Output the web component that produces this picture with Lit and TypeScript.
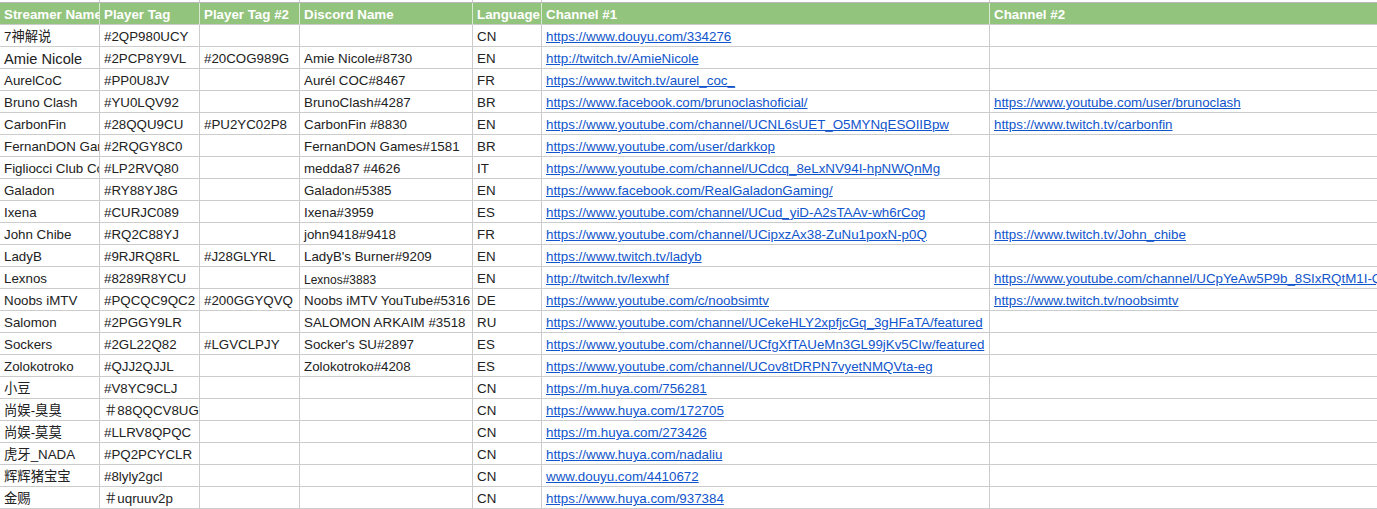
import { LitElement, html, css } from "lit";
import { customElement } from "lit/decorators.js";

type Row = { c: string[]; big?: boolean; smallDiscord?: boolean };
const rows: Row[] = [
  { c: ["7神解说", "#2QP980UCY", "", "", "CN", "https://www.douyu.com/334276", ""] },
  { c: ["Amie Nicole", "#2PCP8Y9VL", "#20COG989G", "Amie Nicole#8730", "EN", "http://twitch.tv/AmieNicole", ""], big: true },
  { c: ["AurelCoC", "#PP0U8JV", "", "Aurél COC#8467", "FR", "https://www.twitch.tv/aurel_coc_", ""] },
  { c: ["Bruno Clash", "#YU0LQV92", "", "BrunoClash#4287", "BR", "https://www.facebook.com/brunoclashoficial/", "https://www.youtube.com/user/brunoclash"] },
  { c: ["CarbonFin", "#28QQU9CU", "#PU2YC02P8", "CarbonFin #8830", "EN", "https://www.youtube.com/channel/UCNL6sUET_O5MYNqESOIIBpw", "https://www.twitch.tv/carbonfin"] },
  { c: ["FernanDON Games", "#2RQGY8C0", "", "FernanDON Games#1581", "BR", "https://www.youtube.com/user/darkkop", ""] },
  { c: ["Figliocci Club Coc", "#LP2RVQ80", "", "medda87 #4626", "IT", "https://www.youtube.com/channel/UCdcq_8eLxNV94I-hpNWQnMg", ""] },
  { c: ["Galadon", "#RY88YJ8G", "", "Galadon#5385", "EN", "https://www.facebook.com/RealGaladonGaming/", ""] },
  { c: ["Ixena", "#CURJC089", "", "Ixena#3959", "ES", "https://www.youtube.com/channel/UCud_yiD-A2sTAAv-wh6rCog", ""] },
  { c: ["John Chibe", "#RQ2C88YJ", "", "john9418#9418", "FR", "https://www.youtube.com/channel/UCipxzAx38-ZuNu1poxN-p0Q", "https://www.twitch.tv/John_chibe"] },
  { c: ["LadyB", "#9RJRQ8RL", "#J28GLYRL", "LadyB's Burner#9209", "EN", "https://www.twitch.tv/ladyb", ""] },
  { c: ["Lexnos", "#8289R8YCU", "", "Lexnos#3883", "EN", "http://twitch.tv/lexwhf", "https://www.youtube.com/channel/UCpYeAw5P9b_8SIxRQtM1I-Q"], smallDiscord: true },
  { c: ["Noobs iMTV", "#PQCQC9QC2", "#200GGYQVQ", "Noobs iMTV YouTube#5316", "DE", "https://www.youtube.com/c/noobsimtv", "https://www.twitch.tv/noobsimtv"] },
  { c: ["Salomon", "#2PGGY9LR", "", "SALOMON ARKAIM #3518", "RU", "https://www.youtube.com/channel/UCekeHLY2xpfjcGq_3gHFaTA/featured", ""] },
  { c: ["Sockers", "#2GL22Q82", "#LGVCLPJY", "Socker's SU#2897", "ES", "https://www.youtube.com/channel/UCfgXfTAUeMn3GL99jKv5CIw/featured", ""] },
  { c: ["Zolokotroko", "#QJJ2QJJL", "", "Zolokotroko#4208", "ES", "https://www.youtube.com/channel/UCov8tDRPN7vyetNMQVta-eg", ""] },
  { c: ["小豆", "#V8YC9CLJ", "", "", "CN", "https://m.huya.com/756281", ""] },
  { c: ["尚娱-臭臭", "＃88QQCV8UG", "", "", "CN", "https://www.huya.com/172705", ""] },
  { c: ["尚娱-莫莫", "#LLRV8QPQC", "", "", "CN", "https://m.huya.com/273426", ""] },
  { c: ["虎牙_NADA", "#PQ2PCYCLR", "", "", "CN", "https://www.huya.com/nadaliu", ""] },
  { c: ["辉辉猪宝宝", "#8lyly2gcl", "", "", "CN", "www.douyu.com/4410672", ""] },
  { c: ["金赐", "＃uqruuv2p", "", "", "CN", "https://www.huya.com/937384", ""] },
];
const heads = ["Streamer Name", "Player Tag", "Player Tag #2", "Discord Name", "Language", "Channel #1", "Channel #2"];

@customElement("app-root")
export class AppRoot extends LitElement {
  static styles = css`
    :host { display: block; width: 1377px; height: 509px; overflow: hidden; background: #fff;
      font-family: "Liberation Sans", Arial, "Noto Sans CJK SC", sans-serif; font-size: 13.333px; color: #222; }
    .row { display: grid; grid-template-columns: 100px 100px 100px 173px 69px 448px 400px; height: 22px; box-sizing: border-box; width: 1390px; }
    .stub { height: 3px; border-bottom: 1px solid #b7b7b7; }
    .stub .cell { border-bottom: 0; height: 2px; }
    .cell { box-sizing: border-box; border-right: 1px solid #ccc; border-bottom: 1px solid #ccc; padding: 2px 3px 0 4px;
      white-space: nowrap; overflow: hidden; line-height: 20px; height: 22px; }
    .head .cell { background: #93c47d; color: #fff; font-weight: 700; border-right-color: #d9ead3; }
    .big { font-size: 14.667px; }
    .small { font-size: 12px; padding-top: 3px; }
    a { color: #1155cc; text-decoration: underline; }
  `;
  render() {
    return html`
      <div class="row stub">${heads.map(() => html`<div class="cell"></div>`)}</div>
      <div class="row head">${heads.map((h) => html`<div class="cell">${h}</div>`)}</div>
      ${rows.map((r) => html`<div class="row">
        ${r.c.map((t, i) => {
          const cls = "cell" + (r.big && i === 0 ? " big" : "") + (r.smallDiscord && i === 3 ? " small" : "");
          return html`<div class=${cls}>${i >= 5 && t ? html`<a href="#">${t}</a>` : t}</div>`;
        })}
      </div>`)}
    `;
  }
}
